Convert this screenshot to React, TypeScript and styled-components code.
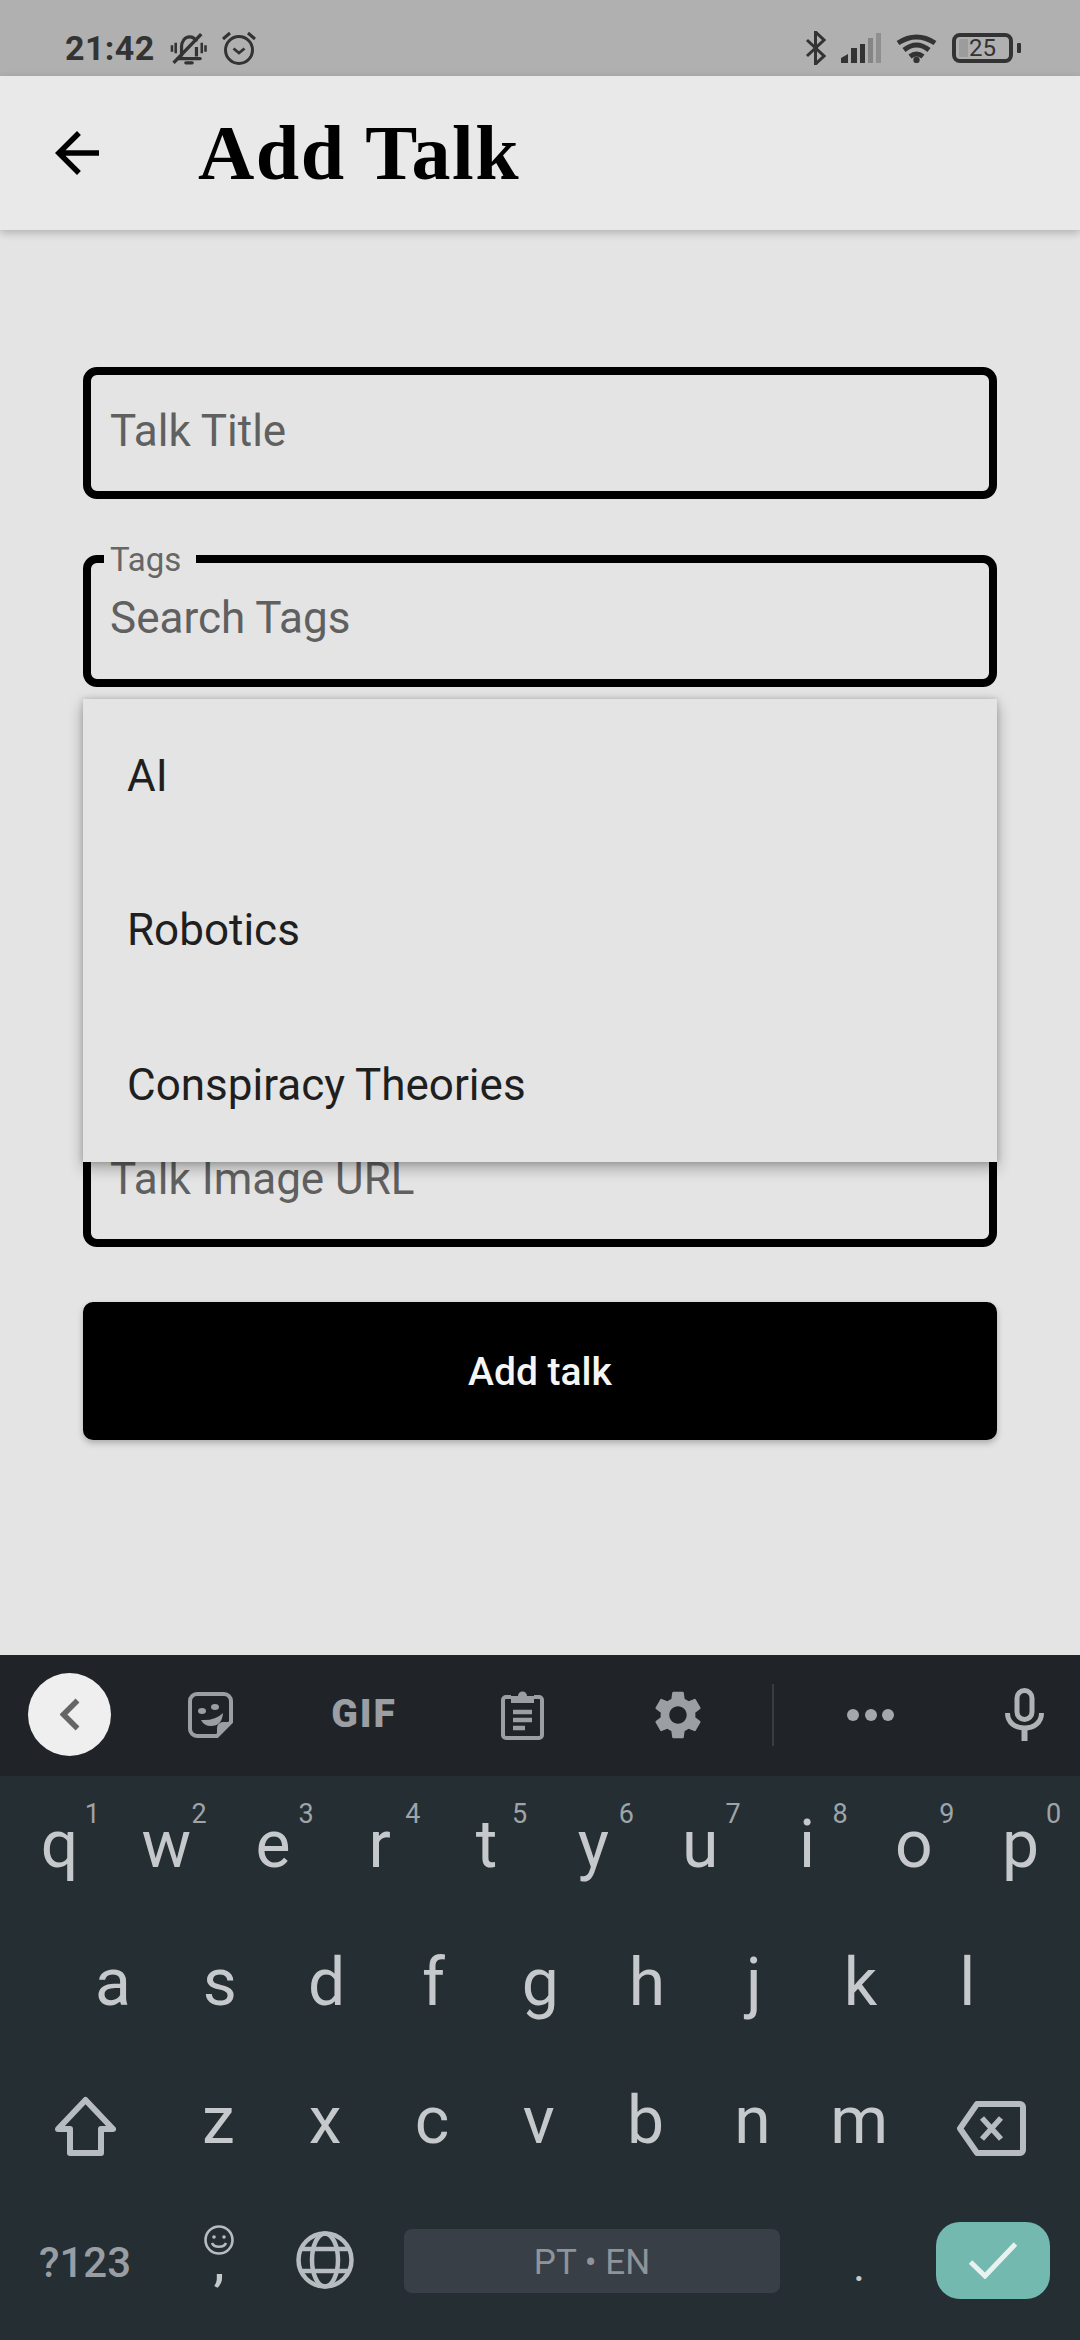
import React from "react";
import styled, { createGlobalStyle } from "styled-components";

const Global = createGlobalStyle`
  html, body { margin: 0; padding: 0; background: #e4e4e4; }
  * { box-sizing: border-box; }
  body { font-family: Roboto, "Liberation Sans", sans-serif; }
`;

const Page = styled.div`
  width: 1080px; height: 2340px; overflow: hidden;
  display: flex; flex-direction: column; background: #e4e4e4;
`;

const StatusBar = styled.div`
  height: 76px; flex: none; background: #b0b0b0; display: flex; align-items: center;
  padding: 0 60px 0 65px; color: #333;
`;
const StatusGroup = styled.div<{ $gap: number }>`
  display: flex; align-items: center; gap: ${p => p.$gap}px; padding-top: 20px; height: 76px;
`;
const Clock = styled.span`
  font-size: 34px; font-weight: 700; line-height: 1; letter-spacing: 0.4px; margin-right: 1px;
`;
const Spacer = styled.div` flex: 1; `;
const Battery = styled.div`
  width: 61px; height: 30px; border: 4px solid #333; border-radius: 8px; position: relative;
  display: flex; align-items: center; justify-content: center; font-size: 24px; line-height: 1; color: #333;
  background: linear-gradient(90deg, #9c9c9c 0 9px, transparent 9px);
  background-origin: content-box; background-clip: content-box; padding: 2px 3px;
  margin-right: 7px;
`;
const BatteryNub = styled.i`
  position: absolute; right: -12px; top: 6px; width: 4px; height: 10px; background: #333; border-radius: 1px;
`;

const AppBar = styled.header`
  height: 154px; flex: none; background: #e9e9e9; display: flex; align-items: center;
  box-shadow: 0 3px 8px rgba(0,0,0,.22); position: relative; z-index: 2;
`;
const BackSlot = styled.div`
  width: 198px; padding-left: 44px; display: flex; align-items: center;
`;
const Title = styled.h1`
  margin: 0; font-family: "Liberation Serif", serif; font-weight: 700; font-size: 78px; line-height: 1;
  letter-spacing: 1.5px; color: #000;
`;

const Main = styled.main`
  flex: 1; padding: 137px 83px 0; display: flex; flex-direction: column; gap: 56px;
`;
const Field = styled.div<{ $h?: number; $lift?: number }>`
  height: ${p => p.$h ?? 132}px; border: 8px solid #000; border-radius: 14px; flex: none; position: relative;
  display: flex; align-items: center; padding: 0 0 ${p => p.$lift ?? 4}px 19px;
  font-size: 44px; color: #606060; line-height: 1;
`;
const FloatLabel = styled.span`
  position: absolute; left: 13px; top: -21px; height: 36px; background: #e4e4e4; padding: 0 15px 0 6px;
  font-size: 33px; line-height: 36px; color: #666;
`;
const Menu = styled.div`
  position: absolute; left: -8px; right: -8px; top: calc(100% + 20px); height: 463px; z-index: 3;
  background: #e4e4e4; display: flex; flex-direction: column;
  box-shadow: 0 6px 14px rgba(0,0,0,.3), 0 0 6px rgba(0,0,0,.16);
`;
const MenuItem = styled.div`
  flex: 1; display: flex; align-items: center; padding-left: 44px; font-size: 44px; color: #1f1f1f;
`;
const SubmitButton = styled.button`
  height: 138px; flex: none; margin-top: -1px; padding: 2px 0 0; border: 0; border-radius: 10px; background: #000; color: #f5f5f5;
  font-family: Roboto, sans-serif; font-weight: 500; font-size: 39px;
  box-shadow: 0 3px 6px rgba(0,0,0,.25);
`;

const Keyboard = styled.section`
  height: 685px; flex: none; background: #252e33; display: flex; flex-direction: column;
`;
const Toolbar = styled.div`
  height: 121px; flex: none; background: #202429; display: flex; align-items: center; padding-bottom: 2px;
`;
const ToolSlot = styled.div<{ $w: number }>`
  width: ${p => p.$w}px; flex: none; height: 100%; display: flex; align-items: center; justify-content: center;
  color: #9b9fa3;
`;
const BackCircle = styled.div`
  width: 83px; height: 83px; border-radius: 50%; background: #efefef; display: flex; align-items: center; justify-content: center;
`;
const GifLabel = styled.span`
  font-size: 39px; font-weight: 900; letter-spacing: 2px; line-height: 1; color: #9b9fa3;
`;
const Divider = styled.div`
  width: 2px; height: 62px; background: #363e42;
`;
const Row = styled.div<{ $pad?: number; $h?: number }>`
  height: ${p => p.$h ?? 138}px; display: flex; align-items: center; padding-left: ${p => p.$pad ?? 0}px; flex: none;
`;
const Key = styled.div`
  width: 106.8px; height: 100%; flex: none; position: relative; display: flex; align-items: center; justify-content: center;
  font-size: 66px; line-height: 1; color: #c5c9cc;
`;
const Hint = styled.span`
  position: absolute; left: calc(50% + 33px); top: 23px; transform: translateX(-50%);
  font-size: 27px; line-height: 30px; color: #9ea4a8;
`;
const SideSlot = styled.div<{ $w: number; $x?: number; $y?: number }>`
  width: ${p => p.$w}px; flex: none; height: 100%; display: flex; flex-direction: column; align-items: center; justify-content: center;
  padding: ${p => p.$y ?? 0}px 0 0 ${p => p.$x ?? 0}px;
  color: #b6bcbf;
`;
const Symbols = styled.span`
  font-size: 42px; font-weight: 500; color: #989ea3; line-height: 1;
`;
const CommaGlyph = styled.span`
  font-size: 50px; line-height: 16px; height: 40px; color: #c5c9cc; font-weight: 500;
`;
const SpaceBar = styled.div`
  width: 376px; height: 64px; margin-left: 24px; margin-top: 2px; padding-top: 3px; flex: none; border-radius: 8px; background: #383f46;
  display: flex; align-items: center; justify-content: center; font-size: 35px; color: #8e9499;
`;
const PeriodSlot = styled.div`
  width: 154px; margin-left: 2px; flex: none; height: 100%; display: flex; align-items: center; justify-content: center;
  font-size: 46px; color: #c5c9cc; padding-top: 10px;
`;
const EnterKey = styled.div`
  width: 114px; height: 77px; flex: none; border-radius: 24px; background: #74b9af;
  display: flex; align-items: center; justify-content: center;
`;

const row1: [string, string][] = [["q","1"],["w","2"],["e","3"],["r","4"],["t","5"],["y","6"],["u","7"],["i","8"],["o","9"],["p","0"]];
const row2 = "asdfghjkl".split("");
const row3 = "zxcvbnm".split("");

const BellOff = () => (
  <svg width="38" height="33" viewBox="0 0 35 31" fill="none" stroke="#333" strokeWidth="3">
    <path d="M10.500 23V14c0-5 3-9.500 7.500-9.500 3 0 5.500 2 6.500 4.500M24.500 14v9" />
    <path d="M7 25h21" strokeLinecap="round" />
    <path d="M14.500 29h6" strokeLinecap="round" />
    <path d="M5 10v10M1.500 12.500v6M29.500 10v10M33 12.500v6" strokeWidth="2.400" />
    <path d="M3 29 29 2" strokeWidth="3.200" />
  </svg>
);
const Alarm = () => (
  <svg width="34" height="34" viewBox="0 0 34 34" fill="none" stroke="#333" strokeWidth="3">
    <circle cx="17" cy="19" r="13.500" />
    <path d="M11.500 17.500l5.500 4.500 5.500-4.500" strokeWidth="2.800" />
    <path d="M1 8l7-6M33 8l-7-6" strokeWidth="3" />
  </svg>
);
const Bluetooth = () => (
  <svg width="21" height="34" viewBox="0 0 21 34" fill="none" stroke="#333" strokeWidth="3">
    <path d="M2 9l17 16-8.500 8V1L19 9 2 25" />
  </svg>
);
const Signal = () => (
  <svg width="40" height="30" viewBox="0 0 40 30">
    <path d="M0 30v-5l7-4v9z" fill="#333" />
    <rect x="10" y="15" width="6" height="15" fill="#333" />
    <rect x="19" y="11" width="5" height="19" fill="#333" />
    <rect x="27" y="5" width="5" height="25" fill="#858585" />
    <rect x="35" y="0" width="5" height="30" fill="#8f8f8f" />
  </svg>
);
const Wifi = () => (
  <svg width="41" height="30" viewBox="0 0 41 30" fill="none" stroke="#333" strokeWidth="5">
    <path d="M2 10Q20.500-2 39 10" />
    <path d="M8 17Q20.500 7 33 17" />
    <path d="M14 23.500Q20.500 18.500 27 23.500" />
    <circle cx="20.500" cy="27" r="3.200" fill="#333" stroke="none" />
  </svg>
);
const ArrowBack = () => (
  <svg width="66" height="66" viewBox="0 0 24 24" fill="#000">
    <path d="M20 11H7.830l5.590-5.590L12 4l-8 8 8 8 1.410-1.410L7.830 13H20v-2z" />
  </svg>
);
const Chevron = () => (
  <svg width="20" height="33" viewBox="0 0 20 33" fill="none" stroke="#666" strokeWidth="5.500">
    <path d="M17.500 2.500 3.500 16.500l14 14" />
  </svg>
);
const Sticker = () => (
  <svg width="45" height="46" viewBox="0 0 45 46" fill="none" stroke="currentColor" strokeWidth="4">
    <path d="M9 2h27a7 7 0 0 1 7 7v21L29 44H9a7 7 0 0 1-7-7V9a7 7 0 0 1 7-7z" />
    <path d="M43 30H35a6 6 0 0 0-6 6v8z" fill="currentColor" stroke="none" />
    <ellipse cx="14" cy="19" rx="4" ry="3" fill="currentColor" stroke="none" />
    <ellipse cx="27" cy="15" rx="4" ry="3" fill="currentColor" stroke="none" />
    <path d="M13 28q14 1 22-7-1 13-12 13-7 0-10-6z" fill="currentColor" stroke="none" />
  </svg>
);
const Clipboard = () => (
  <svg width="43" height="51" viewBox="0 0 43 51" fill="none" stroke="currentColor" strokeWidth="4">
    <path d="M10 8H5a3 3 0 0 0-3 3v35a3 3 0 0 0 3 3h33a3 3 0 0 0 3-3V11a3 3 0 0 0-3-3h-5" />
    <path d="M10 14V7h7a4.500 4.500 0 0 1 9 0h7v7z" fill="currentColor" stroke="none" />
    <path d="M12 23h19M12 31h19M12 39h12" strokeWidth="4.500" />
  </svg>
);
const Gear = () => (
  <svg width="58" height="58" viewBox="0 0 24 24" fill="currentColor">
    <path d="M19.140 12.940c.04-.3.06-.61.06-.94 0-.32-.02-.64-.07-.94l2.030-1.580c.18-.14.23-.41.12-.61l-1.920-3.320c-.12-.22-.37-.29-.59-.22l-2.390.96c-.5-.38-1.030-.7-1.620-.94l-.36-2.540c-.04-.24-.24-.41-.48-.41h-3.840c-.24 0-.43.17-.47.41l-.36 2.540c-.59.24-1.130.57-1.620.94l-2.390-.96c-.22-.08-.47 0-.59.22L2.740 8.870c-.12.21-.08.47.12.61l2.030 1.580c-.05.3-.09.63-.09.94s.02.64.07.94l-2.030 1.580c-.18.14-.23.41-.12.61l1.920 3.320c.12.22.37.29.59.22l2.390-.96c.5.38 1.030.7 1.620.94l.36 2.540c.05.24.24.41.48.41h3.840c.24 0 .44-.17.47-.41l.36-2.540c.59-.24 1.130-.56 1.620-.94l2.390.96c.22.08.47 0 .59-.22l1.920-3.320c.12-.22.07-.47-.12-.61l-2.010-1.580zM12 15.600c-1.980 0-3.600-1.620-3.600-3.600s1.620-3.600 3.600-3.600 3.600 1.620 3.600 3.600-1.620 3.600-3.600 3.600z" />
  </svg>
);
const Dots = () => (
  <svg width="48" height="14" viewBox="0 0 48 14" fill="#a5a8ab">
    <circle cx="6" cy="7" r="6" />
    <circle cx="24" cy="7" r="6" />
    <circle cx="41" cy="7" r="6" />
  </svg>
);
const Mic = () => (
  <svg width="39" height="53" viewBox="0 0 39 53" fill="none" stroke="#b0b3b6" strokeWidth="5">
    <rect x="12" y="2.500" width="15" height="29" rx="7.500" />
    <path d="M2.500 25c0 10 8 15 17 15s17-5 17-15" />
    <path d="M19.500 40v13" strokeWidth="6" />
  </svg>
);
const Shift = () => (
  <svg width="61" height="60" viewBox="0 0 61 60" fill="none" stroke="#b6bcbf" strokeWidth="6" strokeLinejoin="round">
    <path d="M30.500 4 58 33H46v24H15V33H3z" />
  </svg>
);
const Backspace = () => (
  <svg width="69" height="55" viewBox="0 0 69 55" fill="none" stroke="#b6bcbf" strokeWidth="6" strokeLinejoin="round">
    <path d="M20 3h43a3 3 0 0 1 3 3v43a3 3 0 0 1-3 3H20L3 27.500z" />
    <path d="M25 17l19 21M44 17 25 38" strokeWidth="5.500" />
  </svg>
);
const Smile = () => (
  <svg width="30" height="30" viewBox="0 0 30 30" fill="none" stroke="#b6bcbf" strokeWidth="2.600">
    <circle cx="15" cy="15" r="13.500" />
    <circle cx="10" cy="12" r="1.800" fill="#b6bcbf" stroke="none" />
    <circle cx="20" cy="12" r="1.800" fill="#b6bcbf" stroke="none" />
    <path d="M8 18c2 5 12 5 14 0" />
  </svg>
);
const Globe = () => (
  <svg width="58" height="58" viewBox="0 0 58 58" fill="none" stroke="#b6bcbf" strokeWidth="4.500">
    <circle cx="29" cy="29" r="26.500" />
    <ellipse cx="29" cy="29" rx="13" ry="26.500" />
    <path d="M5 18h48M5 40h48" />
  </svg>
);
const Check = () => (
  <svg width="48" height="37" viewBox="0 0 48 37" fill="none" stroke="#e8f2f0" strokeWidth="5">
    <path d="M1.500 20 16 34 46.500 2" />
  </svg>
);

export default function App() {
  return (
    <Page>
      <Global />
      <StatusBar>
        <StatusGroup $gap={14}>
          <Clock>21:42</Clock>
          <BellOff />
          <Alarm />
        </StatusGroup>
        <Spacer />
        <StatusGroup $gap={15}>
          <Bluetooth />
          <Signal />
          <Wifi />
          <Battery>
            25
            <BatteryNub />
          </Battery>
        </StatusGroup>
      </StatusBar>
      <AppBar>
        <BackSlot><ArrowBack /></BackSlot>
        <Title>Add Talk</Title>
      </AppBar>
      <Main>
        <Field>Talk Title</Field>
        <Field $lift={6}>
          <FloatLabel>Tags</FloatLabel>
          Search Tags
          <Menu>
            <MenuItem>AI</MenuItem>
            <MenuItem>Robotics</MenuItem>
            <MenuItem>Conspiracy Theories</MenuItem>
          </Menu>
        </Field>
        <Field $h={130} />
        <Field $h={130} />
        <Field>Talk Image URL</Field>
        <SubmitButton>Add talk</SubmitButton>
      </Main>
      <Keyboard>
        <Toolbar>
          <ToolSlot $w={139}><BackCircle><Chevron /></BackCircle></ToolSlot>
          <ToolSlot $w={142}><Sticker /></ToolSlot>
          <ToolSlot $w={166}><GifLabel>GIF</GifLabel></ToolSlot>
          <ToolSlot $w={150}><Clipboard /></ToolSlot>
          <ToolSlot $w={162}><Gear /></ToolSlot>
          <ToolSlot $w={28}><Divider /></ToolSlot>
          <ToolSlot $w={168}><Dots /></ToolSlot>
          <ToolSlot $w={138}><Mic /></ToolSlot>
        </Toolbar>
        <Row $pad={6}>
          {row1.map(([l, n]) => (
            <Key key={l}>{l}<Hint>{n}</Hint></Key>
          ))}
        </Row>
        <Row $pad={59.6}>
          {row2.map(l => <Key key={l}>{l}</Key>)}
        </Row>
        <Row>
          <SideSlot $w={165} $x={5} $y={10}><Shift /></SideSlot>
          {row3.map(l => <Key key={l}>{l}</Key>)}
          <SideSlot $w={157} $y={14}><Backspace /></SideSlot>
        </Row>
        <Row $h={140}>
          <SideSlot $w={170} $y={6}><Symbols>?123</Symbols></SideSlot>
          <SideSlot $w={98}><Smile /><CommaGlyph>,</CommaGlyph></SideSlot>
          <SideSlot $w={112} $x={2}><Globe /></SideSlot>
          <SpaceBar>PT • EN</SpaceBar>
          <PeriodSlot>.</PeriodSlot>
          <EnterKey><Check /></EnterKey>
        </Row>
      </Keyboard>
    </Page>
  );
}
